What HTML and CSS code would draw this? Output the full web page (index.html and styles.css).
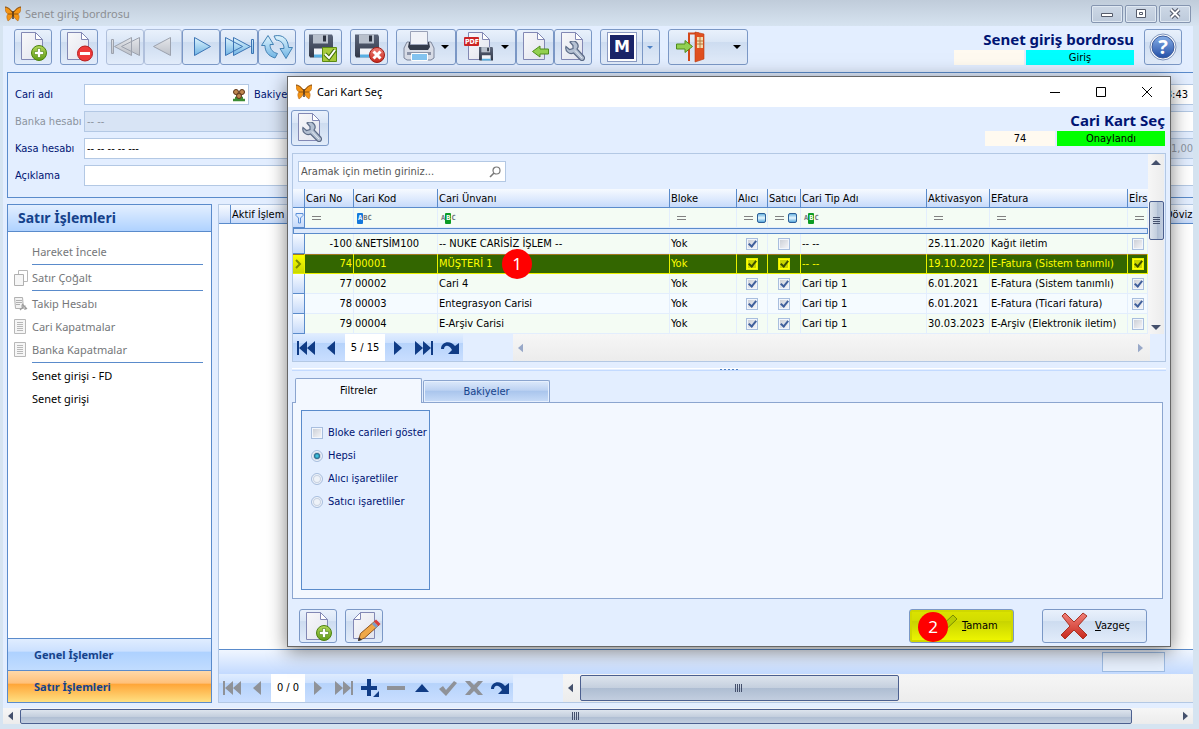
FILE: index.html
```
<!DOCTYPE html>
<html lang="tr">
<head>
    <meta charset="UTF-8">
    <meta name="viewport" content="width=device-width, initial-scale=1.0">
    <title>Senet giriş bordrosu</title>
    <link rel="stylesheet" href="styles.css">
</head>
<body>
    <!-- Shared icons -->
    <svg class="defs" width="0" height="0">
        <defs>
            <linearGradient id="g-page" x1="0" y1="0" x2="1" y2="1"><stop offset="0" stop-color="#f8f8fa"/><stop offset="1" stop-color="#e2e4ee"/></linearGradient>
            <linearGradient id="g-blue" x1="0" y1="0" x2="0" y2="1"><stop offset="0" stop-color="#dff4fd"/><stop offset="1" stop-color="#6fb4e4"/></linearGradient>
            <linearGradient id="g-grey" x1="0" y1="0" x2="0" y2="1"><stop offset="0" stop-color="#e4e6ea"/><stop offset="1" stop-color="#bcc0c8"/></linearGradient>
            <linearGradient id="g-green" x1="0" y1="0" x2="0" y2="1"><stop offset="0" stop-color="#b5d95c"/><stop offset="1" stop-color="#5f9c14"/></linearGradient>
            <linearGradient id="g-red" x1="0" y1="0" x2="0" y2="1"><stop offset="0" stop-color="#f08078"/><stop offset="1" stop-color="#c8281c"/></linearGradient>
            <linearGradient id="g-steel" x1="0" y1="0" x2="0" y2="1"><stop offset="0" stop-color="#5a6478"/><stop offset="1" stop-color="#333a4a"/></linearGradient>
            <linearGradient id="g-help" x1="0" y1="0" x2="0" y2="1"><stop offset="0" stop-color="#86aee6"/><stop offset="1" stop-color="#2450a8"/></linearGradient>
        </defs>
        <symbol id="butterfly" viewBox="0 0 16 16">
            <path d="M8 7C6 3 3 1 0 1c0 4 1 6 3 7-2 2-1 5 0 7 2-1 4-4 5-6 1 2 3 5 5 6 1-2 2-5 0-7 2-1 3-3 3-7-3 0-6 2-8 6z" fill="#f49414" stroke="#a85c10" stroke-width=".5"/>
            <path d="M3 8h4M13 8H9M0 1c2 0 5 2 7 5M16 1c-2 0-5 2-7 5" stroke="#6c3c0c" stroke-width=".7" fill="none"/>
            <path d="M8 5v8" stroke="#3c2410" stroke-width="1.400"/>
        </symbol>
        <symbol id="page" viewBox="0 0 36 34">
            <path d="M6.500 2.500h14l7 7v20h-21z" fill="url(#g-page)" stroke="#8288b4"/>
            <path d="M20.500 2.500v7h7z" fill="#fff" stroke="#8288b4"/>
        </symbol>
        <symbol id="floppy" viewBox="0 0 24 24">
            <path d="M0 1h23l1 2v21H1l-1-2z" fill="url(#g-steel)"/>
            <path d="M4 1h15v9H4z" fill="#b8c0cc"/><path d="M14 2h3v6h-3z" fill="#2c3240"/>
            <path d="M5 15h15v9H5z" fill="#f2f4f8"/><path d="M5 21h15v3H5z" fill="#58b0e4"/>
        </symbol>
        <symbol id="plus-ball" viewBox="0 0 16 16">
            <circle cx="8" cy="8" r="7.500" fill="url(#g-green)" stroke="#4c8210"/>
            <path d="M6.500 3.500h3v3h3v3h-3v3h-3v-3h-3v-3h3z" fill="#fff" stroke="#4c8210" stroke-width=".6"/>
        </symbol>
        <symbol id="wrench" viewBox="0 0 20 20">
            <path d="M5 1a5 5 0 0 1 7 7l7 7.500a2.500 2.500 0 0 1-3.500 3.500L8.500 12A5.500 5.500 0 0 1 1 5.500L4.500 8.500 8 7.500 8 4.500z" fill="#b4c0d2" stroke="#5c6b86" stroke-width="1.200"/>
            <path d="M10 9.500l7 7.500" stroke="#e4eaf2"/>
        </symbol>
        <symbol id="arrow-left" viewBox="0 0 17 12">
            <path d="M.5 6L8 .5v3h8.500v5H8v3z" fill="#92d050" stroke="#4e8c1c"/>
        </symbol>
        <symbol id="new-doc" viewBox="0 0 36 34">
            <use href="#page"/><use href="#plus-ball" x="16" y="15" width="16" height="16"/>
        </symbol>
        <symbol id="page-tool" viewBox="0 0 36 34">
            <use href="#page"/><use href="#wrench" x="10" y="11" width="20" height="20"/>
        </symbol>
        <symbol id="nav-first" viewBox="0 0 20 16"><path d="M1 1h2v14H1zM11 1v14L3 8zM19 1v14l-8-7z" fill="currentColor"/></symbol>
        <symbol id="nav-prev" viewBox="0 0 20 16"><path d="M13 1v14L5 8z" fill="currentColor"/></symbol>
        <symbol id="nav-next" viewBox="0 0 20 16"><path d="M6 1v14l8-7z" fill="currentColor"/></symbol>
        <symbol id="nav-last" viewBox="0 0 20 16"><path d="M19 1h-2v14h2zM9 1v14l8-7zM1 1v14l8-7z" fill="currentColor"/></symbol>
        <symbol id="nav-redo" viewBox="0 0 20 16"><path d="M1 9C1 1 11 0 15 6l4-3v11H8l4-4C9 4 4 5 4 9z" fill="currentColor"/></symbol>
        <symbol id="lens" viewBox="0 0 12 12"><circle cx="7.500" cy="4.500" r="3.500" fill="none" stroke="#777" stroke-width="1.200"/><path d="M5 7L1 11" stroke="#777" stroke-width="1.600"/></symbol>
        <symbol id="list" viewBox="0 0 14 16"><path d="M.5.5h11v14H.5z" fill="#f6f6f6" stroke="#b8b8b8"/><path d="M3 3.500h6M3 5.500h6M3 7.500h6M3 9.500h6M3 11.500h6" stroke="#b8b8b8"/></symbol>
        <symbol id="tri-l" viewBox="0 0 6 10"><path d="M6 0v10L0 5z" fill="currentColor"/></symbol>
        <symbol id="tri-r" viewBox="0 0 6 10"><path d="M0 0v10l6-5z" fill="currentColor"/></symbol>
    </svg>

    <div class="window">
        <header class="titlebar">
            <svg width="16" height="16"><use href="#butterfly"/></svg>
            <span>Senet giriş bordrosu</span>
            <div class="window-buttons">
                <button aria-label="Küçült"><svg width="12" height="12"><path d="M.5 5.500h11v3H.5z" fill="#fff" stroke="#555b6b"/></svg></button>
                <button aria-label="Büyüt"><svg width="12" height="12"><path d="M1.500 1.500h9v8h-9z" fill="#fff" stroke="#555b6b"/><path d="M4.500 4.500h3v2h-3z" fill="none" stroke="#555b6b"/></svg></button>
                <button aria-label="Kapat"><svg width="12" height="12"><path d="M2 1.500l8 8M10 1.500l-8 8" stroke="#555b6b" stroke-width="4"/><path d="M2 1.500l8 8M10 1.500l-8 8" stroke="#fff" stroke-width="1.800"/></svg></button>
            </div>
        </header>

        <main class="client">
            <div class="toolbar">
                <button class="tool" aria-label="Yeni"><svg width="36" height="34"><use href="#new-doc"/></svg></button>
                <button class="tool gap" aria-label="Sil"><svg width="36" height="34"><use href="#page"/><circle cx="24" cy="23.500" r="7.500" fill="#ee3a3a" stroke="#b81c1c"/><path d="M19 22h10v3H19z" fill="#fff"/></svg></button>
                <button class="tool gap off" aria-label="İlk"><svg width="36" height="34"><g fill="url(#g-grey)" stroke="#9ca2ae"><path d="M4.500 9.500h2v14h-2zM24.500 7.500v18L7.500 16.500zM32.500 7.500v18l-18-9z"/></g></svg></button>
                <button class="tool off" aria-label="Önceki"><svg width="36" height="34"><path d="M25.500 7.500v18l-17-9z" fill="url(#g-grey)" stroke="#9ca2ae"/></svg></button>
                <button class="tool" aria-label="Sonraki"><svg width="36" height="34"><path d="M11.500 7.500v18l16-9z" fill="url(#g-blue)" stroke="#3c74b4"/></svg></button>
                <button class="tool" aria-label="Son"><svg width="36" height="34"><g fill="url(#g-blue)" stroke="#3c74b4"><path d="M4.500 7.500v18l17-9zM12.500 7.500v18l17-9zM30.500 9.500h2v14h-2z"/></g></svg></button>
                <button class="tool" aria-label="Yenile"><svg width="36" height="34"><g fill="url(#g-blue)" stroke="#4482b4"><path d="M2.500 15.500L9 5.500l5.500 9h-3.500c0 5 3 8 7.500 9l-2.500 4.500C9.500 26 6 22 6 15.500z"/><path d="M33.500 17.500L27 28.500l-6-10h4c0-5-3-8-8-8.500l-2-4c9-2 14 3 14.500 11.500z"/></g></svg></button>
                <button class="tool gap" aria-label="Kaydet"><svg width="36" height="34"><use href="#floppy" x="4" y="3" width="24" height="25"/><path d="M17.500 17.500h14v14h-14z" fill="#a8cc3c" stroke="#5c8c14"/><path d="M20 24l4 4 6-8" fill="none" stroke="#44700c" stroke-width="4"/><path d="M20 24l4 4 6-8" fill="none" stroke="#fff" stroke-width="2"/></svg></button>
                <button class="tool gap" aria-label="Vazgeç"><svg width="36" height="34"><use href="#floppy" x="4" y="3" width="24" height="25"/><circle cx="26" cy="25" r="7.500" fill="url(#g-red)" stroke="#a01c14"/><path d="M22.500 21.500l7 7M29.500 21.500l-7 7" stroke="#fff" stroke-width="3"/></svg></button>
                <button class="tool wide gap" aria-label="Yazdır"><svg width="40" height="34"><path d="M10 12h24l3 6v10l-3 2H10l-3-2V18z" fill="#d8dce6" stroke="#7c869c"/><path d="M12 12h20l1 5-2 3H13l-2-3z" fill="#343c4c"/><path d="M13.500 1.500h17v13h-17z" fill="#f0f2f8" stroke="#9aa2b8"/><path d="M10 22h24v3H10z" fill="#8c94a8"/><path d="M14.500 23.500h16v7h-16z" fill="#84c4f0" stroke="#fff"/></svg><i class="caret"></i></button>
                <button class="tool wide" aria-label="PDF"><svg width="40" height="34"><path d="M11.500 2.500h14l7 7v20h-21z" fill="url(#g-page)" stroke="#8288b4"/><path d="M25.500 2.500v7h7z" fill="#fff" stroke="#8288b4"/><rect x="7" y="7" width="15" height="9" rx="1" fill="#cc2424"/><text x="8" y="14" class="pdf-text">PDF</text><use href="#floppy" x="22" y="16" width="14" height="15"/></svg><i class="caret"></i></button>
                <button class="tool" aria-label="Aktar"><svg width="36" height="34"><use href="#page"/><use href="#arrow-left" x="15" y="15" width="17" height="13"/></svg></button>
                <button class="tool" aria-label="Ayarlar"><svg width="36" height="34"><use href="#page-tool"/></svg></button>
                <button class="tool wide split gap" aria-label="M"><svg width="42" height="34"><rect x="6.500" y="2.500" width="29" height="29" fill="#fff" stroke="#8c9cc4"/><rect x="9" y="5" width="24" height="24" fill="#1a2468"/><text x="21" y="22" class="m-text">M</text></svg><i class="caret blue"></i></button>
                <button class="tool exit gap" aria-label="Çıkış"><svg width="40" height="34"><path d="M20 31V3.500h10" fill="none" stroke="#d4481c" stroke-width="2"/><path d="M26 2l9 2v25l-9 3z" fill="#e05020" stroke="#b83c14" stroke-width=".6"/><path d="M28 7h6v11h-6z" fill="#f4dcae"/><path d="M31 7v11M28 11h6M28 14h6" stroke="#b87840"/><path d="M23.500 16.500L16 10.500v3.500H7.500v5H16v3.500z" fill="#92d050" stroke="#4e8c1c"/></svg><i class="caret"></i></button>

                <div class="form-title">
                    <h1>Senet giriş bordrosu</h1>
                    <div class="status"><span></span><span class="cyan">Giriş</span></div>
                </div>
                <button class="tool help" aria-label="Yardım"><svg width="36" height="34"><circle cx="18" cy="17" r="13" fill="#fff" stroke="#7e94bc"/><circle cx="18" cy="17" r="11" fill="url(#g-help)" stroke="#3c5c9c"/><text x="18" y="24" class="q-text">?</text></svg></button>
            </div>

            <section class="fields">
                <div class="field-row">
                    <label for="cari">Cari adı</label>
                    <span class="lookup"><input type="text" id="cari"><svg width="14" height="14"><path d="M1 12h12M3 10h8" stroke="#3c8c34" stroke-width="2.500"/><g fill="#c08850" stroke="#5c3418"><circle cx="4" cy="4" r="2.500"/><circle cx="10" cy="4" r="2.500"/><circle cx="7" cy="8" r="2.500"/></g></svg></span>
                    <label for="saat" class="next-label">Bakiye</label>
                    <input type="text" id="saat" class="edge" value="13:08:43">
                </div>
                <div class="field-row off">
                    <label for="banka">Banka hesabı</label>
                    <input type="text" id="banka" class="long" value="-- --" disabled>
                    <input type="text" class="edge" aria-label="Belge">
                </div>
                <div class="field-row">
                    <label for="kasa">Kasa hesabı</label>
                    <input type="text" id="kasa" class="long" value="-- -- -- -- ---">
                    <input type="text" class="edge rate" aria-label="Kur" value="1,00" disabled>
                </div>
                <div class="field-row">
                    <label for="aciklama">Açıklama</label>
                    <input type="text" id="aciklama" class="long">
                    <input type="text" class="edge" aria-label="Özel kod">
                </div>
            </section>

            <div class="workspace">
                <nav class="sidebar">
                    <h2>Satır İşlemleri</h2>
                    <ul>
                        <li class="line"><a href="#">Hareket İncele</a></li>
                        <li class="line"><svg width="14" height="16"><path d="M4.500.5h9v11h-9z" fill="#fff" stroke="#b8b8b8"/><path d="M.5 4.500h9v11h-9z" fill="#f6f6f6" stroke="#b0b0b0"/></svg><a href="#">Satır Çoğalt</a></li>
                        <li><svg width="14" height="16"><path d="M.5 1.500h8l1 11h-8z" fill="#f2f2f2" stroke="#b0b0b0"/><path d="M2 4.500h6M2 6.500h6M2 8.500h4" stroke="#b0b0b0"/><path d="M6 14l3-3M8 8l5 5M7 10h4v4" stroke="#9c9c9c" stroke-width="1.200" fill="none"/></svg><a href="#">Takip Hesabı</a></li>
                        <li><svg width="14" height="16"><use href="#list"/></svg><a href="#">Cari Kapatmalar</a></li>
                        <li class="line"><svg width="14" height="16"><use href="#list"/></svg><a href="#">Banka Kapatmalar</a></li>
                        <li class="on"><a href="#">Senet girişi - FD</a></li>
                        <li class="on"><a href="#">Senet girişi</a></li>
                    </ul>
                    <button class="group">Genel İşlemler</button>
                    <button class="group active">Satır İşlemleri</button>
                </nav>

                <section class="entries">
                    <table class="entries-table">
                        <colgroup><col class="c-mark"><col><col class="c-doviz"></colgroup>
                        <thead><tr><th></th><th>Aktif İşlem Adı</th><th>Döviz</th></tr></thead>
                        <tbody></tbody>
                    </table>
                    <div class="summary"><input type="text" aria-label="Toplam" readonly></div>
                    <div class="navigator off">
                        <button aria-label="İlk"><svg width="20" height="16"><use href="#nav-first"/></svg></button>
                        <button aria-label="Önceki"><svg width="20" height="16"><use href="#nav-prev"/></svg></button>
                        <span class="counter">0 / 0</span>
                        <button aria-label="Sonraki"><svg width="20" height="16"><use href="#nav-next"/></svg></button>
                        <button aria-label="Son"><svg width="20" height="16"><use href="#nav-last"/></svg></button>
                        <button class="live" aria-label="Ekle"><svg width="20" height="18"><path d="M7 0h4v7h6v4h-6v6H7v-6H1V7h6zM19 12v6h-6z" fill="currentColor"/></svg></button>
                        <button aria-label="Sil"><svg width="20" height="16"><path d="M1 6h18v4H1z" fill="currentColor"/></svg></button>
                        <button class="live" aria-label="Düzenle"><svg width="20" height="16"><path d="M3 12l7-8 7 8z" fill="currentColor"/></svg></button>
                        <button aria-label="Onayla"><svg width="20" height="16"><path d="M1 9l4-3 3 4 8-9 3 2L8 16z" fill="currentColor"/></svg></button>
                        <button aria-label="İptal"><svg width="20" height="16"><path d="M1 1h5l4 4 4-4h5l-6 7 6 7h-5l-4-4-4 4H1l6-7z" fill="currentColor"/></svg></button>
                        <button class="live" aria-label="Yenile"><svg width="20" height="16"><use href="#nav-redo"/></svg></button>
                        <div class="hscroll grid-scroll">
                            <svg width="5" height="10"><use href="#tri-l"/></svg>
                            <div class="thumb"></div>
                        </div>
                    </div>
                </section>
            </div>

            <div class="hscroll page-scroll">
                <svg width="5" height="10"><use href="#tri-l"/></svg>
                <div class="thumb"></div>
                <svg width="5" height="10"><use href="#tri-r"/></svg>
            </div>
        </main>
    </div>

    <!-- Card picker dialog -->
    <div class="dialog" role="dialog" aria-labelledby="dialog-caption">
        <header class="dialog-title">
            <svg width="16" height="16"><use href="#butterfly"/></svg>
            <span id="dialog-caption">Cari Kart Seç</span>
            <button aria-label="Küçült"><svg width="12" height="12"><path d="M1 6.500h10" stroke="#000"/></svg></button>
            <button aria-label="Büyüt"><svg width="12" height="12"><path d="M1.500 1.500h9v9h-9z" fill="none" stroke="#000"/></svg></button>
            <button aria-label="Kapat"><svg width="12" height="12"><path d="M1 1l10 10M11 1L1 11" stroke="#000"/></svg></button>
        </header>

        <div class="dialog-head">
            <button class="tool" aria-label="Ayarlar"><svg width="36" height="34"><use href="#page-tool"/></svg></button>
            <div class="form-title">
                <h1>Cari Kart Seç</h1>
                <div class="status"><span>74</span><span class="lime">Onaylandı</span></div>
            </div>
        </div>

        <section class="picker">
            <div class="picker-main">
                <div class="picker-body">
                    <div class="search">
                        <input type="text" aria-label="Ara" placeholder="Aramak için metin giriniz...">
                        <svg width="12" height="12"><use href="#lens"/></svg>
                    </div>
                    <table class="cards">
                        <colgroup>
                            <col class="c-mark"><col class="c-no"><col class="c-kod"><col><col class="c-bloke"><col class="c-alici"><col class="c-satici"><col class="c-tip"><col class="c-akt"><col class="c-efat"><col class="c-eirs">
                        </colgroup>
                        <thead>
                            <tr><th></th><th>Cari No</th><th>Cari Kod</th><th>Cari Ünvanı</th><th>Bloke</th><th>Alıcı</th><th>Satıcı</th><th>Cari Tip Adı</th><th>Aktivasyon</th><th>EFatura</th><th>Eİrs</th></tr>
                        </thead>
                        <tbody>
                            <tr class="filter">
                                <td class="mark"><svg width="9" height="12"><path d="M1 1.500h7v2L5.500 6v5h-2V6L1 3.500z" fill="#dcebff" stroke="#5c90d8"/></svg></td>
                                <td><i class="eq"></i></td>
                                <td><i class="abc starts"><b>A</b>BC</i></td>
                                <td><i class="abc has">A<b>B</b>C</i></td>
                                <td><i class="eq"></i></td>
                                <td><i class="eq"></i><i class="tri"></i></td>
                                <td><i class="eq"></i><i class="tri"></i></td>
                                <td><i class="abc has">A<b>B</b>C</i></td>
                                <td><i class="eq"></i></td>
                                <td><i class="eq"></i></td>
                                <td><i class="eq"></i></td>
                            </tr>
                            <tr class="divider"><td colspan="11"></td></tr>
                            <tr><td class="mark"></td><td class="num">-100</td><td>&amp;NETSİM100</td><td>-- NUKE CARİSİZ İŞLEM --</td><td>Yok</td><td class="chk"><input type="checkbox" aria-label="Alıcı" checked></td><td class="chk"><input type="checkbox" aria-label="Satıcı"></td><td>-- --</td><td>25.11.2020</td><td>Kağıt iletim</td><td class="chk"><input type="checkbox" aria-label="Eİrsaliye"></td></tr>
                            <tr class="selected"><td class="mark"><svg width="8" height="10"><path d="M1 1l4 4-4 4" fill="none" stroke="#7a8c00" stroke-width="2"/></svg></td><td class="num">74</td><td>00001</td><td class="pinned">MÜŞTERİ 1<span class="badge">1</span></td><td>Yok</td><td class="chk"><input type="checkbox" aria-label="Alıcı" checked></td><td class="chk"><input type="checkbox" aria-label="Satıcı" checked></td><td>-- --</td><td>19.10.2022</td><td>E-Fatura (Sistem tanımlı)</td><td class="chk"><input type="checkbox" aria-label="Eİrsaliye" checked></td></tr>
                            <tr><td class="mark"></td><td class="num">77</td><td>00002</td><td>Cari 4</td><td>Yok</td><td class="chk"><input type="checkbox" aria-label="Alıcı" checked></td><td class="chk"><input type="checkbox" aria-label="Satıcı" checked></td><td>Cari tip 1</td><td>6.01.2021</td><td>E-Fatura (Sistem tanımlı)</td><td class="chk"><input type="checkbox" aria-label="Eİrsaliye" checked></td></tr>
                            <tr class="alt"><td class="mark"></td><td class="num">78</td><td>00003</td><td>Entegrasyon Carisi</td><td>Yok</td><td class="chk"><input type="checkbox" aria-label="Alıcı" checked></td><td class="chk"><input type="checkbox" aria-label="Satıcı" checked></td><td>Cari tip 1</td><td>6.01.2021</td><td>E-Fatura (Ticari fatura)</td><td class="chk"><input type="checkbox" aria-label="Eİrsaliye" checked></td></tr>
                            <tr><td class="mark"></td><td class="num">79</td><td>00004</td><td>E-Arşiv Carisi</td><td>Yok</td><td class="chk"><input type="checkbox" aria-label="Alıcı" checked></td><td class="chk"><input type="checkbox" aria-label="Satıcı" checked></td><td>Cari tip 1</td><td>30.03.2023</td><td>E-Arşiv (Elektronik iletim)</td><td class="chk"><input type="checkbox" aria-label="Eİrsaliye"></td></tr>
                        </tbody>
                    </table>
                </div>
                <div class="vscroll">
                    <i class="caret up"></i>
                    <div class="thumb"></div>
                    <i class="caret"></i>
                </div>
            </div>
            <div class="navigator">
                <button aria-label="İlk"><svg width="20" height="16"><use href="#nav-first"/></svg></button>
                <button aria-label="Önceki"><svg width="20" height="16"><use href="#nav-prev"/></svg></button>
                <span class="counter">5 / 15</span>
                <button aria-label="Sonraki"><svg width="20" height="16"><use href="#nav-next"/></svg></button>
                <button aria-label="Son"><svg width="20" height="16"><use href="#nav-last"/></svg></button>
                <button aria-label="Yenile"><svg width="20" height="16"><use href="#nav-redo"/></svg></button>
                <div class="hscroll idle">
                    <svg width="5" height="10"><use href="#tri-l"/></svg>
                    <svg width="5" height="10"><use href="#tri-r"/></svg>
                </div>
            </div>
        </section>

        <div class="splitter"><i></i></div>

        <div class="tabs">
            <button class="tab current">Filtreler</button>
            <button class="tab">Bakiyeler</button>
        </div>
        <div class="tab-page">
            <form class="filters">
                <label><input type="checkbox"> Bloke carileri göster</label>
                <label><input type="radio" name="tip" checked> Hepsi</label>
                <label><input type="radio" name="tip"> Alıcı işaretliler</label>
                <label><input type="radio" name="tip"> Satıcı işaretliler</label>
            </form>
        </div>

        <footer class="dialog-foot">
            <button class="tool" aria-label="Yeni"><svg width="36" height="32"><use href="#new-doc" width="36" height="34"/></svg></button>
            <button class="tool gap" aria-label="Düzenle"><svg width="36" height="32"><path d="M14.500 2.500h14v26h-21v-19z" fill="url(#g-page)" stroke="#8288b4"/><path d="M14.500 2.500v7h-7z" fill="#fff" stroke="#8288b4"/><path d="M12.500 30.500l2-7L29 11l4 4-14.500 13z" fill="#f0a848" stroke="#8c5420"/><path d="M27 13l4 4" stroke="#7c9ccc" stroke-width="3"/><path d="M29 10.500l4.500 4.500" stroke="#d83c3c" stroke-width="3"/><path d="M12 31l1-4 3 3z" fill="#333"/></svg></button>
            <button class="action ok">
                <svg width="38" height="32"><path d="M9 18l4-4 5 5L33 5l4 4-19 18z" fill="#b8cc00" stroke="#7a8c00"/></svg>
                <span><u>T</u>amam</span><span class="badge">2</span>
            </button>
            <button class="action cancel">
                <svg width="28" height="28"><path d="M2 4l3-3 9 9 9-9 4 3-9 10 9 9-4 4-9-9-9 9-4-4 9-9z" fill="url(#g-red)" stroke="#a83424"/></svg>
                <span><u>V</u>azgeç</span>
            </button>
        </footer>
    </div>
</body>
</html>
```
FILE: styles.css
```
* {
    box-sizing: border-box;
}

body {
    margin: 0;
    position: relative;
    background-color: #d6e4f1;
    color: #000;
    font: 11px/14px "DejaVu Sans Condensed", "Liberation Sans", sans-serif;
}

button, input {
    font: inherit;
    color: inherit;
    margin: 0;
    padding: 0;
}

button {
    cursor: pointer;
}

svg {
    display: block;
    flex: none;
}

h1, h2, ul {
    margin: 0;
    padding: 0;
}

.defs {
    position: absolute;
}

/* Main window */
.window {
    min-height: 100vh;
    display: flex;
    flex-direction: column;
    padding: 0 6px 5px 3px;
}

.titlebar {
    height: 26px;
    margin: 0 -6px 0 -3px;
    padding: 2px 8px 0 5px;
    display: flex;
    align-items: center;
    gap: 4px;
    background: linear-gradient(#c0ccda, #d6e3f0);
    color: #8c8f94;
    font: 11px/16px "Noto Sans", sans-serif;
}

.window-buttons {
    margin-left: auto;
    display: flex;
    gap: 2px;
}

.window-buttons button {
    width: 32px;
    height: 18px;
    display: flex;
    align-items: center;
    justify-content: center;
    border: 1px solid #8595b0;
    border-radius: 2px;
    background: linear-gradient(#cdd8e6, #bdcadb);
    box-shadow: inset 0 0 0 1px #dfe8f2;
}

.client {
    flex: 1;
    display: flex;
    flex-direction: column;
    background-color: #e3eeff;
}

/* Toolbar */
.toolbar {
    display: flex;
    height: 46px;
    padding: 3px 11px 0;
}

.tool {
    width: 38px;
    height: 36px;
    flex: none;
    display: flex;
    align-items: center;
    border: 1px solid #7b98c6;
    border-radius: 3px;
    background: linear-gradient(#e9f1fc, #dae6f6 35%, #cddcf0 36%, #e2ecfa);
}

.tool.off {
    border-color: #b0c0dc;
}

.tool.gap {
    margin-left: 8px;
}

.tool.wide {
    width: 60px;
}

.tool.exit {
    width: 80px;
    justify-content: space-between;
    padding-right: 6px;
}

.tool.help {
    margin-left: 10px;
}

.caret {
    border: 4px solid transparent;
    border-top-color: #000;
    border-bottom: 0;
    margin-left: 4px;
}

.caret.up {
    border-top: 0;
    border-bottom: 4px solid #44506c;
}

.split .caret {
    border-width: 3px;
    border-bottom: 0;
    border-top-color: #4c80c4;
}

.split svg {
    border-right: 1px solid #7b98c6;
}

.pdf-text {
    font: bold 7px "DejaVu Sans Condensed", sans-serif;
    fill: #fff;
}

.m-text {
    font: bold 16px "DejaVu Sans", sans-serif;
    fill: #fff;
    text-anchor: middle;
}

.q-text {
    font: bold 20px "Noto Sans", sans-serif;
    fill: #fff;
    text-anchor: middle;
}

.form-title {
    margin-left: auto;
}

.form-title h1 {
    height: 21px;
    color: #001473;
    font: bold 15px/21px "Noto Sans", sans-serif;
    text-align: right;
}

.status {
    display: flex;
    justify-content: flex-end;
    gap: 2px;
}

.status span {
    width: 70px;
    height: 15px;
    line-height: 16px;
    text-align: center;
    background-color: #fffaf0;
}

.status span.cyan {
    width: 108px;
    background-color: #00ffff;
}

.status span.lime {
    width: 108px;
    background-color: #00ff00;
}

/* Field panel */
.fields {
    margin-left: 4px;
    padding: 11px 0 11px 7px;
    display: flex;
    flex-direction: column;
    gap: 6px;
    border: 1px solid #5a8bcb;
    border-right: 0;
    color: #001473;
}

.field-row {
    display: flex;
    align-items: center;
}

.field-row label {
    width: 69px;
    white-space: nowrap;
    overflow: hidden;
}

.field-row label.next-label {
    width: auto;
    margin-left: 5px;
}

.field-row.off label {
    color: #8c94a0;
}

.field-row input {
    height: 21px;
    border: 1px solid #b3c8e4;
    background-color: #fff;
    color: #000;
    padding: 0 2px;
}

.field-row input:disabled {
    background-color: #d8e4f5;
    color: #8c94a0;
}

.lookup {
    position: relative;
}

.lookup input {
    width: 165px;
}

.lookup svg {
    position: absolute;
    right: 3px;
    top: 4px;
}

.field-row .long {
    width: 400px;
}

.field-row .edge {
    width: 120px;
    margin-left: auto;
    border-right: 0;
    text-align: right;
    padding-right: 5px;
}

.field-row .edge.rate {
    padding-right: 0;
}

/* Sidebar */
.workspace {
    flex: 1;
    display: flex;
    gap: 6px;
    margin: 6px 0 5px 4px;
}

.sidebar {
    width: 205px;
    display: flex;
    flex-direction: column;
    border: 1px solid #5a8bcb;
    background-color: #fff;
}

.sidebar h2 {
    height: 27px;
    padding-left: 10px;
    border-bottom: 1px solid #5a8bcb;
    background: linear-gradient(#e3efff, #afd2ff);
    color: #15428b;
    font: bold 14px/25px "Noto Sans", sans-serif;
}

.sidebar ul {
    flex: 1;
    padding: 7px 8px 0 6px;
    list-style: none;
}

.sidebar li {
    height: 23px;
    display: flex;
    align-items: center;
    gap: 4px;
    padding: 2px 0 0 18px;
    font: 11px/16px "Noto Sans", sans-serif;
}

.sidebar li svg {
    margin-left: -18px;
}

.sidebar li.line {
    height: 26px;
    padding-top: 0;
    background: linear-gradient(#5a8bcb, #5a8bcb) 18px 100% / 100% 1px no-repeat;
}

.sidebar li a {
    color: #75777a;
    text-decoration: none;
}

.sidebar li.on a {
    color: #000;
}

.group {
    height: 32px;
    padding-left: 26px;
    text-align: left;
    border: 0;
    border-top: 1px solid #5a8bcb;
    background: linear-gradient(#e0edff, #cbe0ff 40%, #add1ff 41%, #c1dcff);
    color: #15428b;
    font: bold 11px/16px "Noto Sans", sans-serif;
}

.group.active {
    background: linear-gradient(#ffd8a8, #ffc078 40%, #ffa436 41%, #ffe082);
}

/* Entries grid */
.entries {
    flex: 1;
    min-width: 0;
    display: flex;
    flex-direction: column;
    border: 1px solid #b3c8e4;
    border-right: 0;
    background-color: #fff;
}

table {
    width: 100%;
    table-layout: fixed;
    border-collapse: separate;
    border-spacing: 0;
}

th {
    height: 19px;
    padding: 1px 0 0 1px;
    overflow: hidden;
    white-space: nowrap;
    text-align: left;
    font-weight: normal;
    border-right: 1px solid #5a8bcb;
    border-bottom: 1px solid #5a8bcb;
    background: linear-gradient(#f6faff, #dbe8fd 60%, #c6dafa);
}

th:last-child {
    border-right: 0;
}

.c-mark {
    width: 12px;
}

.c-doviz {
    width: 29px;
}

.summary {
    margin-top: auto;
    height: 25px;
    padding: 2px 28px 2px 0;
    display: flex;
    justify-content: flex-end;
    border-top: 1px solid #5a8bcb;
    background: linear-gradient(#f0f6ff, #c3daff);
}

.summary input {
    width: 63px;
    height: 20px;
    border: 1px solid #9ebce4;
    background-color: #e6effc;
}

.navigator {
    display: flex;
    height: 27px;
    color: #103c86;
}

.navigator.off {
    height: 28px;
    color: #8f9298;
}

.navigator .live {
    color: #103c86;
}

.navigator button {
    width: 26px;
    flex: none;
    display: flex;
    align-items: center;
    justify-content: center;
    border: 0;
    background: linear-gradient(#e0edff, #cde1ff 33%, #b6d3fb 34%, #c9deff);
}

.counter {
    width: 40px;
    flex: none;
    line-height: 27px;
    text-align: center;
    color: #000;
    background-color: #fff;
}

.off .counter {
    width: 34px;
}

/* Scroll bars */
.hscroll {
    flex: 1;
    display: flex;
    align-items: center;
    justify-content: space-between;
    color: #44506c;
    background: linear-gradient(#f6f6f6, #ececec);
}

.hscroll .thumb {
    border: 1px solid #4c6090;
    border-radius: 2px;
    background:
        repeating-linear-gradient(90deg, #44506c 0 1px, transparent 1px 2px) center / 8px 8px no-repeat,
        linear-gradient(#dde4ed, #c4cfde 50%, #aebdd2 51%, #c2cedf);
}

.grid-scroll {
    justify-content: flex-start;
    gap: 7px;
    margin-left: 50px;
    padding-left: 5px;
    box-shadow: -50px 0 #e3eeff;
}

.grid-scroll .thumb {
    width: 51%;
    height: 26px;
}

.page-scroll {
    flex: none;
    height: 16px;
    padding: 0 5px;
}

.page-scroll .thumb {
    flex: 1;
    height: 15px;
    margin: 0 51px 0 7px;
}

.idle {
    margin-left: 50px;
    margin-right: 15px;
    padding: 0 7px 0 5px;
    color: #98a8c8;
}

/* Dialog */
.dialog {
    position: absolute;
    top: 76px;
    left: 287px;
    right: 28px;
    border: 1px solid #666;
    background-color: #e3eeff;
    box-shadow: 0 4px 18px rgba(0, 0, 0, 0.5);
}

.dialog-title {
    height: 30px;
    padding: 0 17px 0 8px;
    display: flex;
    align-items: center;
    background-color: #fff;
}

.dialog-title span {
    margin: 0 auto 0 5px;
    font: 11px/16px "Noto Sans", sans-serif;
}

.dialog-title button {
    border: 0;
    background: none;
    margin-left: 34px;
}

.dialog-head {
    display: flex;
    height: 46px;
    padding: 3px 5px 0 3px;
}

.picker {
    margin: 0 4px;
    border: 1px solid #b3c8e4;
}

.picker-main {
    display: flex;
}

.picker-body {
    flex: 1;
    min-width: 0;
}

.search {
    position: relative;
    width: 208px;
    margin: 7px 0 7px 5px;
}

.search input {
    display: block;
    width: 100%;
    height: 21px;
    padding: 0 2px;
    border: 1px solid #b3c8e4;
}

.search input::placeholder {
    color: #555;
}

.search svg {
    position: absolute;
    right: 5px;
    top: 5px;
}

.cards {
    background-color: #f4fcf4;
}

.c-no { width: 49px; }
.c-kod { width: 84px; }
.c-bloke { width: 67px; }
.c-alici { width: 31px; }
.c-satici { width: 33px; }
.c-tip { width: 126px; }
.c-akt { width: 63px; }
.c-efat { width: 138px; }
.c-eirs { width: 20px; }

.cards td {
    height: 20px;
    padding: 1px 0 0 1px;
    white-space: nowrap;
    border-right: 1px solid #e3eefd;
    border-bottom: 1px solid #e3eefd;
}

.cards .alt td {
    background-color: #f5fbff;
}

.cards td.mark {
    padding: 0 0 0 2px;
    border-color: #5a8bcb;
    background: linear-gradient(#f8fbff, #c6dafa);
}

.cards .num {
    padding-right: 1px;
    text-align: right;
}

.cards .chk {
    padding: 0;
    text-align: center;
}

.cards tr.divider td {
    height: 6px;
    padding: 0;
    border: 1px solid #5a8bcb;
    background-color: #dce9fc;
}

.cards .selected td {
    color: #ffff00;
    background-color: #336600;
    border-right-color: #e8f000;
    border-bottom-color: #e8f000;
    box-shadow: inset 0 1px #a07820;
}

.cards .selected td.mark {
    background: linear-gradient(#ffff00, #c8d800);
}

.pinned {
    position: relative;
}

.badge {
    position: absolute;
    width: 30px;
    height: 30px;
    border-radius: 50%;
    background-color: #ff0000;
    color: #fff;
    font: 17px/30px "Noto Sans", sans-serif;
    text-align: center;
}

.pinned .badge {
    left: 64px;
    top: -5px;
    z-index: 1;
}

.filter td {
    font-size: 0;
}

.eq {
    display: inline-block;
    width: 9px;
    height: 4px;
    margin-left: 6px;
    border: 1px solid #808080;
    border-width: 1px 0;
    vertical-align: middle;
}

.tri {
    display: inline-block;
    width: 9px;
    height: 10px;
    margin-left: 4px;
    border: 1px solid #2c6098;
    border-radius: 2px;
    background: linear-gradient(#6cb4e0, #e8f8ff 50%, #58a8dc);
    vertical-align: middle;
}

.abc {
    display: inline-block;
    margin-left: 2px;
    color: #70757c;
    font: bold 7px/11px "DejaVu Sans Mono", monospace;
    vertical-align: middle;
}

.abc b {
    display: inline-block;
    padding: 0 1px;
    border-radius: 1px;
    color: #fff;
    background-color: #1478dc;
}

.abc.has b {
    background-color: #0c9c24;
}

input[type="checkbox"], input[type="radio"] {
    appearance: none;
    width: 12px;
    height: 12px;
    flex: none;
    display: block;
    border: 1px solid #a8bede;
    background: linear-gradient(135deg, #c8ccd4, #f8f8fa);
    box-shadow: inset 0 0 0 1px #f2f6fc;
}

.chk input[type="checkbox"] {
    margin: 0 auto;
}

input[type="checkbox"]:checked::after {
    content: "";
    display: block;
    width: 3px;
    height: 6px;
    margin: 0 0 0 3px;
    border: solid #40609c;
    border-width: 0 2px 2px 0;
    transform: rotate(40deg);
}

.selected input[type="checkbox"] {
    border-color: #e8f000;
    background: #c8d400;
    box-shadow: inset 0 0 0 1px #ffff00;
}

.selected input[type="checkbox"]:checked::after {
    border-color: #3c5000;
}

input[type="radio"] {
    border-radius: 50%;
    background: #eef2f8;
    box-shadow: inset 0 0 0 1px #f2f6fc, inset 0 0 0 2px #c8d2e2;
}

input[type="radio"]:checked {
    background: radial-gradient(circle, #40c0dc 0 1px, #1c5478 3px, #e6ecf4 4px);
}

.vscroll {
    width: 16px;
    margin: 0 1px 0 0;
    display: flex;
    flex-direction: column;
    align-items: center;
    padding: 6px 0 4px;
    background: linear-gradient(90deg, #f6f6f6, #ececec);
}

.vscroll .caret {
    margin: auto 0 0;
    border-width: 5px 5px 0;
    border-top-color: #44506c;
}

.vscroll .caret.up {
    margin: 0;
    border-width: 0 5px 5px;
}

.vscroll .thumb {
    width: 15px;
    height: 39px;
    margin-top: 36px;
    border: 1px solid #4c6090;
    border-radius: 2px;
    background:
        repeating-linear-gradient(#44506c 0 1px, transparent 1px 2px) center / 7px 7px no-repeat,
        linear-gradient(90deg, #dde4ed, #c4cfde 50%, #aebdd2 51%, #c2cedf);
}

.splitter {
    height: 16px;
    margin: 0 4px;
    padding-top: 6px;
}

.splitter i {
    display: block;
    height: 3px;
    border-top: 1px solid #fff;
    border-bottom: 1px solid #c3daff;
    background: repeating-linear-gradient(90deg, #4c80c4 0 2px, transparent 2px 4px) center / 18px 1px no-repeat;
}

.tabs {
    display: flex;
    align-items: flex-end;
    gap: 1px;
    padding-left: 7px;
}

.tab {
    width: 127px;
    height: 22px;
    border: 1px solid #8ba5cf;
    border-bottom: 0;
    border-radius: 2px 2px 0 0;
    color: #15428b;
    background: linear-gradient(#dce9fb, #bcd2f2 45%, #a8c4ec 46%, #c8dcf8);
    box-shadow: inset 0 0 0 1px #e6f0fe;
}

.tab.current {
    height: 25px;
    margin-bottom: -1px;
    position: relative;
    color: #000;
    background: #f3f8ff;
    box-shadow: none;
}

.tab-page {
    margin: 0 7px 0 4px;
    padding: 7px 8px 8px;
    border: 1px solid #8ba5cf;
    background-color: #f3f8ff;
}

.filters {
    width: 129px;
    height: 180px;
    padding: 10px 0 0 9px;
    border: 1px solid #5a8bcb;
    background-color: #e3eeff;
    color: #001473;
}

.filters label {
    display: flex;
    align-items: center;
    gap: 5px;
    height: 23px;
    white-space: nowrap;
}

.dialog-foot {
    display: flex;
    align-items: center;
    height: 47px;
    padding: 7px 23px 0 11px;
}

.dialog-foot .tool {
    height: 34px;
}

.action {
    position: relative;
    width: 105px;
    height: 34px;
    display: flex;
    align-items: center;
    border: 1px solid #7b98c6;
    border-radius: 3px;
    background: linear-gradient(#e9f1fc, #dae6f6 35%, #cddcf0 36%, #e2ecfa);
}

.action.ok {
    margin-left: auto;
    padding-left: 10px;
    gap: 4px;
    background: linear-gradient(#dce400, #d2dc00 35%, #c8d400 36%, #f0f800);
    box-shadow: inset 0 0 0 2px #d0d800;
}

.action.ok .badge {
    left: 8px;
    top: 2px;
}

.action.cancel {
    margin-left: 28px;
    padding-left: 17px;
    gap: 7px;
}
```
